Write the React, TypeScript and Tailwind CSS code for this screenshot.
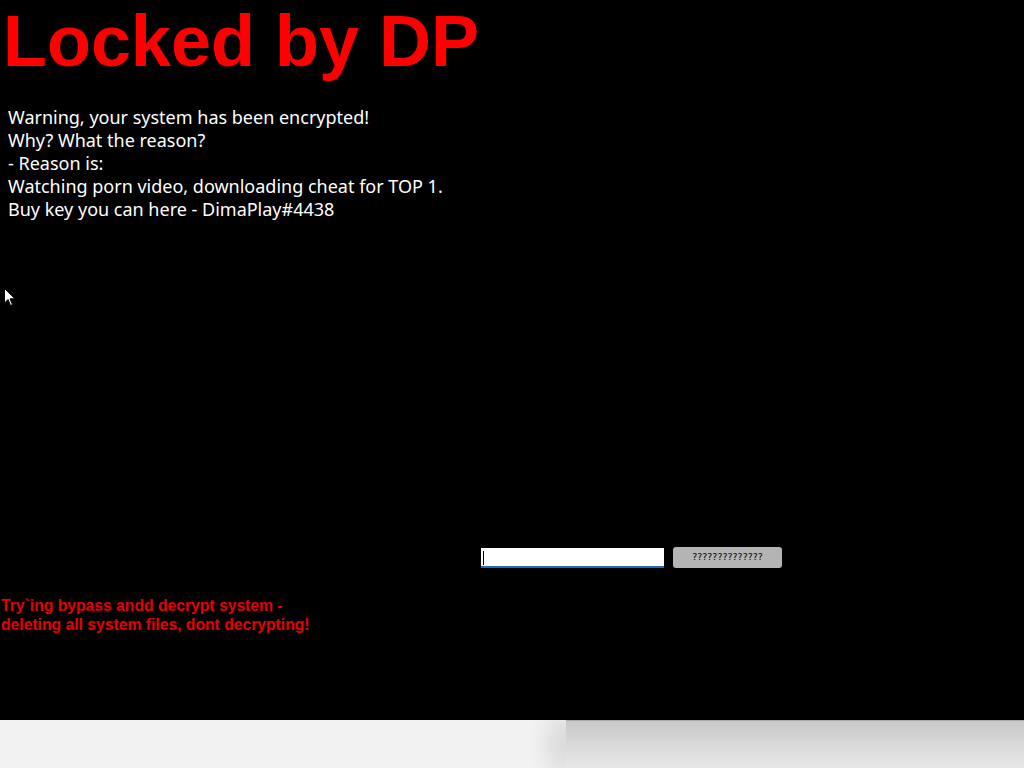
import React from 'react';

const lines = [
  'Warning, your system has been encrypted!',
  'Why? What the reason?',
  '- Reason is:',
  'Watching porn video, downloading cheat for TOP 1.',
  'Buy key you can here - DimaPlay#4438',
];

function Cursor() {
  return (
    <svg className="absolute left-[4px] top-[288px]" width="12" height="19" viewBox="0 0 12 19">
      <path d="M0.5 0.5 L0.5 15 L4 11.5 L6.5 17.5 L8.5 16.6 L6 10.8 L11 10.8 Z" fill="#ffffff" stroke="#000000" strokeWidth="1" />
    </svg>
  );
}

export default function App() {
  return (
    <div className="w-[1024px] h-[768px] flex flex-col overflow-hidden">
      <div className="relative h-[720px] bg-black flex flex-col">
        <h1 className="mt-[5px] ml-[3px] h-[72px] leading-[72px] text-[72px] font-bold text-[#ff0000] font-['Liberation_Sans',Arial,sans-serif] whitespace-nowrap">
          Locked by DP
        </h1>

        <div className="mt-[29px] ml-[8px] text-[18px] leading-[23px] text-white font-['Noto_Sans',sans-serif]">
          {lines.map((l) => (
            <div key={l} className="whitespace-nowrap">{l}</div>
          ))}
        </div>

        <div className="mt-[326px] ml-[481px] flex items-center gap-[9px] h-[21px]">
          <div className="relative w-[183px] h-[20px] bg-white border-b-2 border-[#1f6fb5]">
            <div className="absolute left-[2px] top-[3px] w-px h-[14px] bg-black" />
          </div>
          <button className="w-[109px] h-[21px] rounded-[3px] bg-[#b4b4b4] text-black text-[9.5px] font-['DejaVu_Sans',sans-serif] flex items-center justify-center">
            ??????????????
          </button>
        </div>

        <div className="mt-[28px] ml-[1px] text-[15.7px] leading-[19px] font-bold text-[#e60000] font-['Liberation_Sans',Arial,sans-serif]">
          <div className="whitespace-nowrap">Try`ing bypass andd decrypt system -</div>
          <div className="whitespace-nowrap">deleting all system files, dont decrypting!</div>
        </div>

        <Cursor />
      </div>

      <div className="h-[48px] flex">
        <div className="w-[566px] bg-[#f2f2f2]" />
        <div className="flex-1 bg-gradient-to-b from-[#c9c9c9] to-[#e8e8e8] shadow-[-18px_0_22px_rgba(0,0,0,0.1)] border-t border-[#a8a8a8]" />
      </div>
    </div>
  );
}
